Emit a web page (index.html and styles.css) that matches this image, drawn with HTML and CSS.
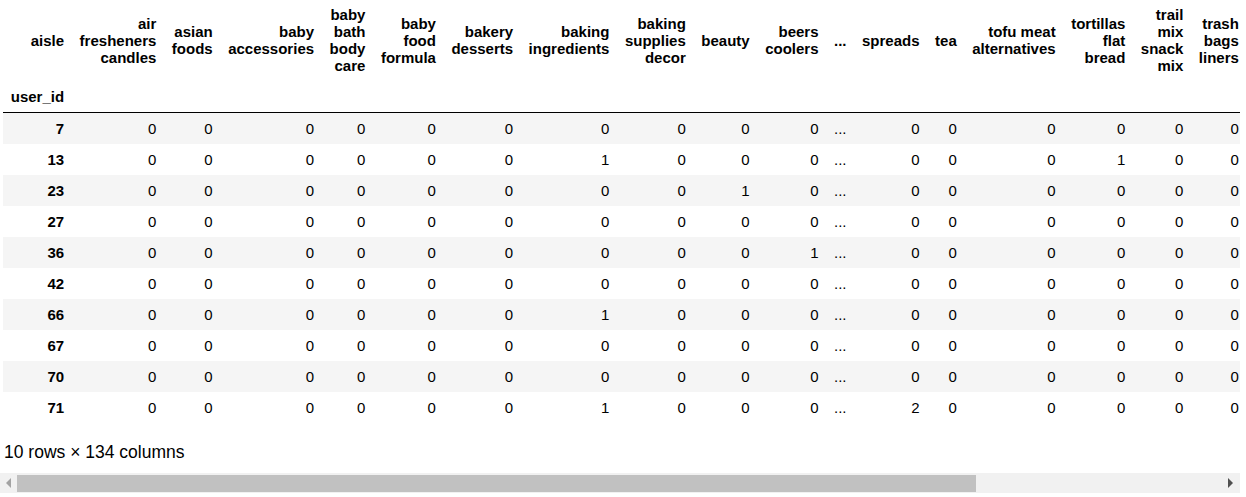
FILE: index.html
```html
<!DOCTYPE html>
<html>
<head>
<meta charset="utf-8">
<link rel="stylesheet" href="styles.css">
</head>
<body>
<div class="output">
  <div class="scroll">
    <table class="dataframe">
      <thead>
        <tr>
          <th>aisle</th>
          <th>air fresheners candles</th>
          <th>asian foods</th>
          <th>baby accessories</th>
          <th>baby bath body care</th>
          <th>baby food formula</th>
          <th>bakery desserts</th>
          <th>baking ingredients</th>
          <th>baking supplies decor</th>
          <th>beauty</th>
          <th>beers coolers</th>
          <th>...</th>
          <th>spreads</th>
          <th>tea</th>
          <th>tofu meat alternatives</th>
          <th>tortillas flat bread</th>
          <th>trail mix snack mix</th>
          <th>trash bags liners</th>
        </tr>
        <tr>
          <th>user_id</th>
          <th></th><th></th><th></th><th></th><th></th><th></th><th></th><th></th><th></th><th></th><th></th><th></th><th></th><th></th><th></th><th></th><th></th>
        </tr>
      </thead>
      <tbody>
        <tr><th>7</th><td>0</td><td>0</td><td>0</td><td>0</td><td>0</td><td>0</td><td>0</td><td>0</td><td>0</td><td>0</td><td>...</td><td>0</td><td>0</td><td>0</td><td>0</td><td>0</td><td>0</td></tr>
        <tr><th>13</th><td>0</td><td>0</td><td>0</td><td>0</td><td>0</td><td>0</td><td>1</td><td>0</td><td>0</td><td>0</td><td>...</td><td>0</td><td>0</td><td>0</td><td>1</td><td>0</td><td>0</td></tr>
        <tr><th>23</th><td>0</td><td>0</td><td>0</td><td>0</td><td>0</td><td>0</td><td>0</td><td>0</td><td>1</td><td>0</td><td>...</td><td>0</td><td>0</td><td>0</td><td>0</td><td>0</td><td>0</td></tr>
        <tr><th>27</th><td>0</td><td>0</td><td>0</td><td>0</td><td>0</td><td>0</td><td>0</td><td>0</td><td>0</td><td>0</td><td>...</td><td>0</td><td>0</td><td>0</td><td>0</td><td>0</td><td>0</td></tr>
        <tr><th>36</th><td>0</td><td>0</td><td>0</td><td>0</td><td>0</td><td>0</td><td>0</td><td>0</td><td>0</td><td>1</td><td>...</td><td>0</td><td>0</td><td>0</td><td>0</td><td>0</td><td>0</td></tr>
        <tr><th>42</th><td>0</td><td>0</td><td>0</td><td>0</td><td>0</td><td>0</td><td>0</td><td>0</td><td>0</td><td>0</td><td>...</td><td>0</td><td>0</td><td>0</td><td>0</td><td>0</td><td>0</td></tr>
        <tr><th>66</th><td>0</td><td>0</td><td>0</td><td>0</td><td>0</td><td>0</td><td>1</td><td>0</td><td>0</td><td>0</td><td>...</td><td>0</td><td>0</td><td>0</td><td>0</td><td>0</td><td>0</td></tr>
        <tr><th>67</th><td>0</td><td>0</td><td>0</td><td>0</td><td>0</td><td>0</td><td>0</td><td>0</td><td>0</td><td>0</td><td>...</td><td>0</td><td>0</td><td>0</td><td>0</td><td>0</td><td>0</td></tr>
        <tr><th>70</th><td>0</td><td>0</td><td>0</td><td>0</td><td>0</td><td>0</td><td>0</td><td>0</td><td>0</td><td>0</td><td>...</td><td>0</td><td>0</td><td>0</td><td>0</td><td>0</td><td>0</td></tr>
        <tr><th>71</th><td>0</td><td>0</td><td>0</td><td>0</td><td>0</td><td>0</td><td>1</td><td>0</td><td>0</td><td>0</td><td>...</td><td>2</td><td>0</td><td>0</td><td>0</td><td>0</td><td>0</td></tr>
      </tbody>
    </table>
    <p class="shape">10 rows × 134 columns</p>
  </div>
  <div class="scrollbar">
    <div class="sb-btn sb-left"><span class="tri-left"></span></div>
    <div class="sb-thumb"></div>
    <div class="sb-rest"></div>
    <div class="sb-btn sb-right"><span class="tri-right"></span></div>
  </div>
</div>
</body>
</html>
```

FILE: styles.css
```css
html, body {
  margin: 0;
  padding: 0;
  background: #ffffff;
}

body {
  font-family: "Liberation Sans", Arial, sans-serif;
  color: #000000;
}

.output {
  width: 1240px;
}

.scroll {
  width: 1240px;
  overflow: hidden;
}

.dataframe {
  width: min-content;
  margin: -1px 0 0 3px;
  border-collapse: collapse;
  border-spacing: 0;
  border: none;
  font-size: 15px;
}

.dataframe th,
.dataframe td {
  text-align: right;
  vertical-align: middle;
  padding: 7px 7.75px;
  line-height: 17px;
  white-space: normal;
  border: none;
}

.dataframe th {
  font-weight: bold;
}

.dataframe td {
  font-weight: normal;
}

.dataframe thead {
  border-bottom: 1px solid #000000;
}

.dataframe tbody tr:nth-child(odd) {
  background: #f5f5f5;
}

.shape {
  margin: 19px 0 11px 4px;
  font-size: 17.5px;
  line-height: 20px;
  white-space: nowrap;
}

.scrollbar {
  display: flex;
  height: 20px;
  background: #f1f1f1;
  width: 1240px;
}

.sb-btn {
  width: 17px;
  flex: none;
  display: flex;
  align-items: center;
  justify-content: center;
}

.sb-thumb {
  width: 959px;
  flex: none;
  margin: 2px 0 1px 0;
  background: #c1c1c1;
}

.sb-rest {
  flex: 1;
}

.tri-left {
  width: 0;
  height: 0;
  border-top: 5px solid transparent;
  border-bottom: 5px solid transparent;
  border-right: 5px solid #a3a3a3;
}

.tri-right {
  width: 0;
  height: 0;
  border-top: 5px solid transparent;
  border-bottom: 5px solid transparent;
  border-left: 5px solid #505050;
  margin-left: -2px;
}
```
